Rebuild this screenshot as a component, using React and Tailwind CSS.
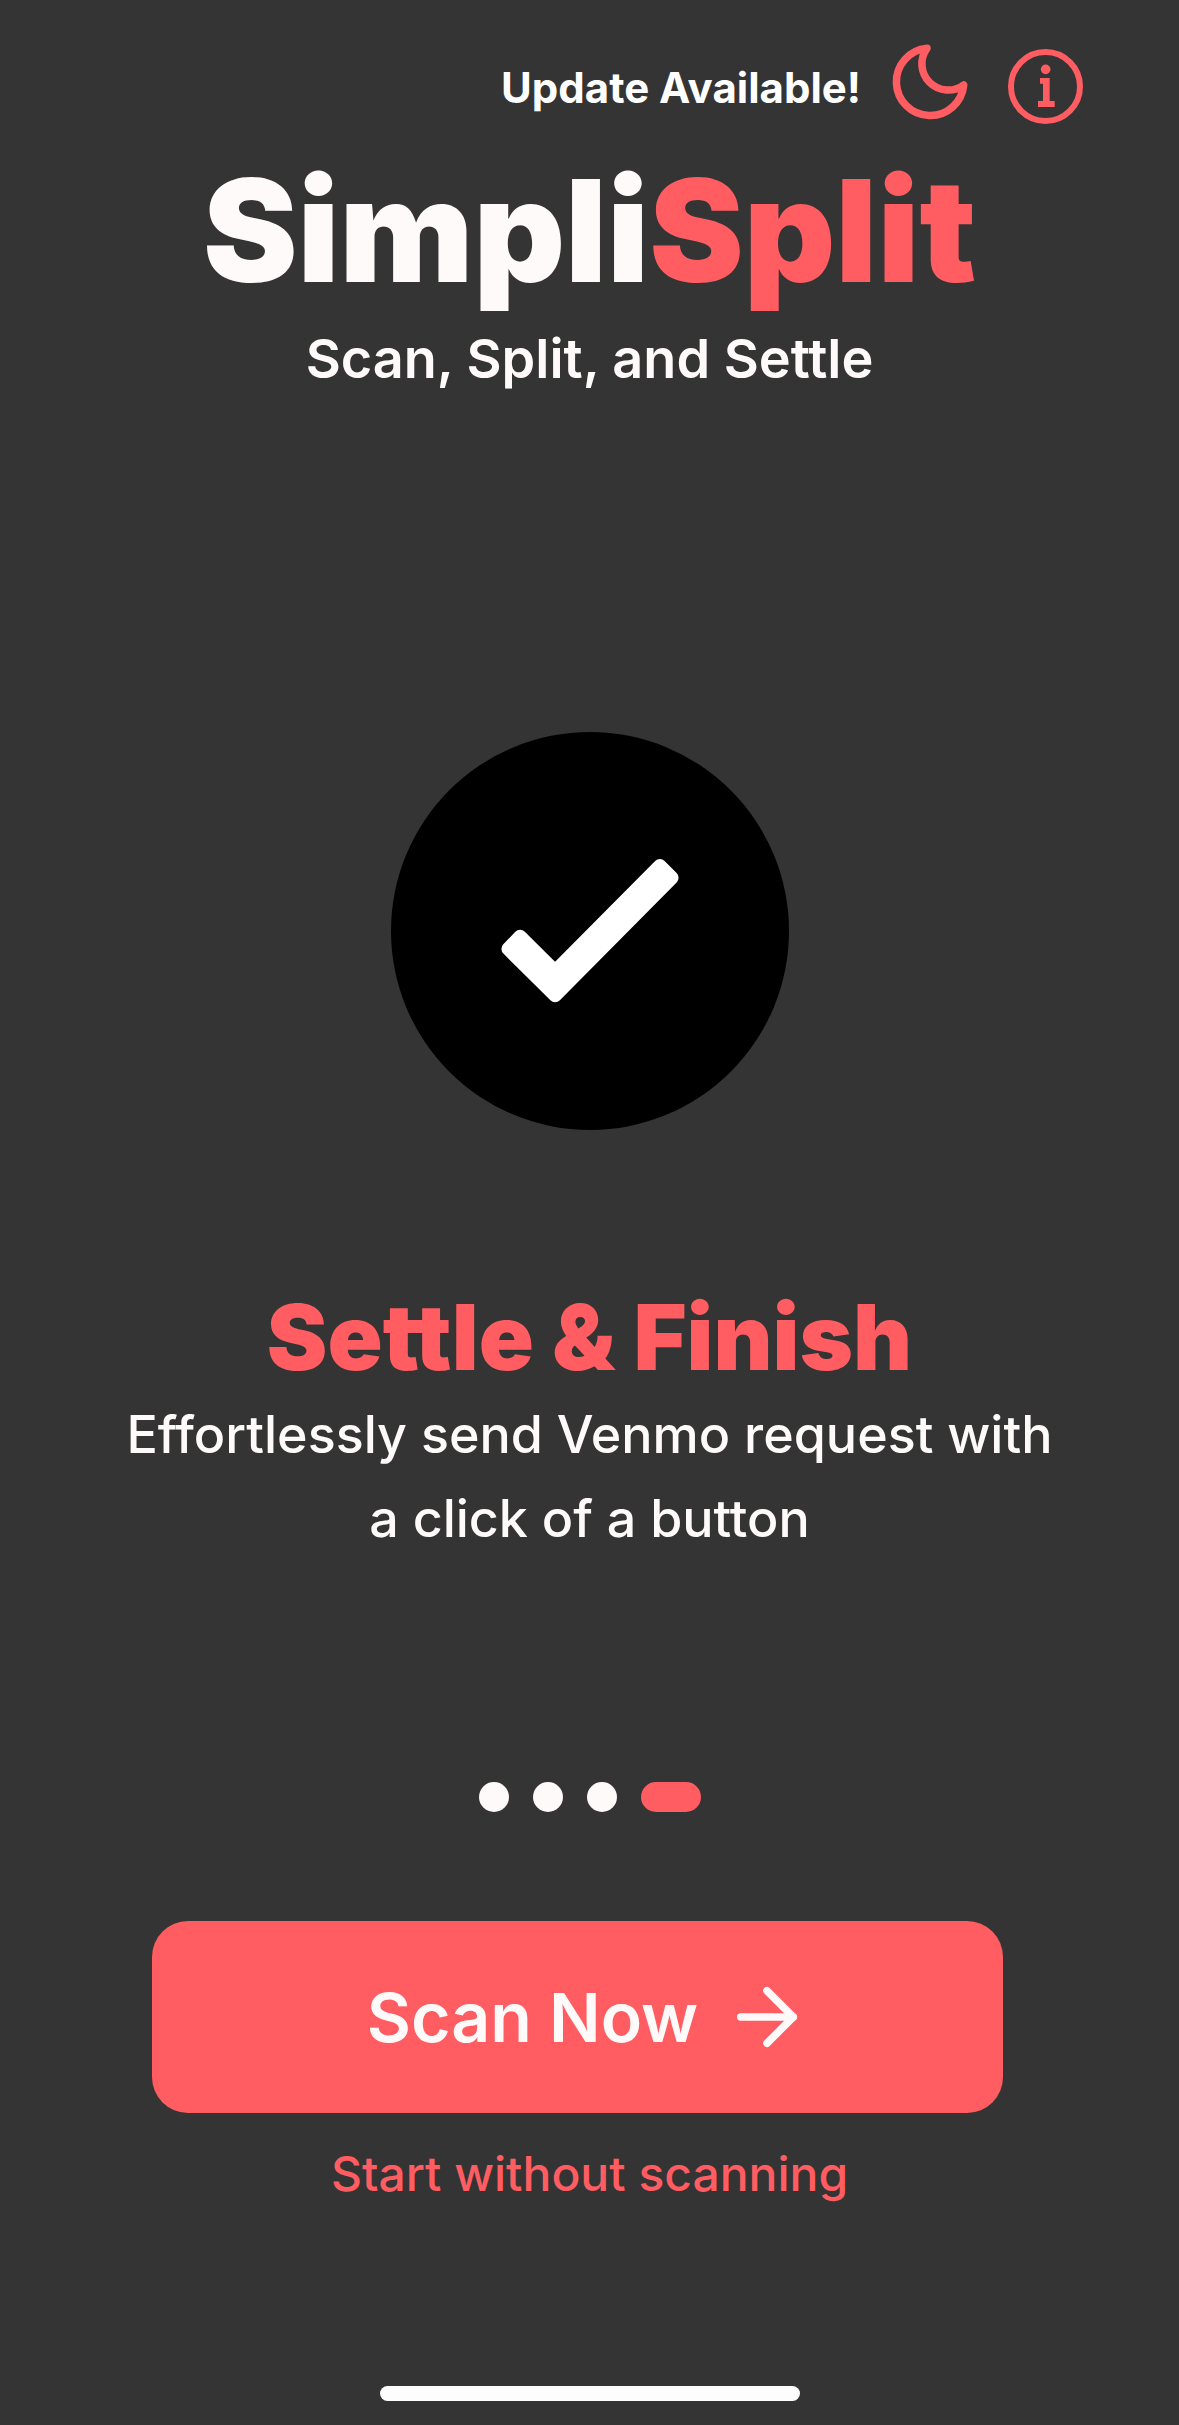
import { FiArrowRight, FiMoon } from "react-icons/fi";

function InfoIcon() {
  return (
    <svg viewBox="0 0 225 225" className="size-[75px]" aria-hidden="true">
      <circle cx="112.5" cy="112.5" r="103.5" fill="none" stroke="currentColor" strokeWidth="18" />
      <circle cx="113" cy="61" r="14.5" fill="currentColor" />
      <path d="M96 87h29v69h15v18H90v-18h15v-52h-9z" fill="currentColor" />
    </svg>
  );
}

function CheckBadge() {
  return (
    <svg viewBox="0 0 1193 1193" className="size-[398px]" role="img" aria-label="Done">
      <circle cx="596.5" cy="596.5" r="596.5" fill="#000" />
      <path
        d="M387 613L492 717L806 401L842 437L492 790L351 650Z"
        fill="#fff"
        stroke="#fff"
        strokeWidth="40"
        strokeLinejoin="round"
      />
    </svg>
  );
}

function Pager({ count, active }) {
  return (
    <div className="flex justify-center gap-6">
      {Array.from({ length: count }, (_, i) => (
        <button
          key={i}
          type="button"
          aria-label={`Slide ${i + 1}`}
          className={
            i === active
              ? "h-[30px] w-[60px] rounded-full bg-[#ff5d62]"
              : "size-[30px] rounded-full bg-[#fffafa]"
          }
        />
      ))}
    </div>
  );
}

export default function App() {
  return (
    <div className="flex min-h-screen flex-col bg-[#343434] font-['Inter',sans-serif] text-[#fffafa]">
      <header className="flex items-center justify-end pt-[37px] pr-24">
        <p className="mt-3 mr-6 text-[42px] leading-[48px] font-bold text-white">Update Available!</p>
        <button type="button" aria-label="Dark mode" className="mr-[33px] text-[#ff5d62]">
          <FiMoon className="size-[90px]" />
        </button>
        <button type="button" aria-label="About" className="mt-2 text-[#ff5d62]">
          <InfoIcon />
        </button>
      </header>

      <h1 className="mt-[23px] text-center text-[142px] leading-[160px] font-black">
        Simpli<span className="text-[#ff5d62]">Split</span>
      </h1>
      <p className="mt-[17px] text-center text-[54px] leading-[64px] font-semibold">Scan, Split, and Settle</p>

      <main className="mt-[341px] flex flex-col items-center px-[120px] text-center">
        <CheckBadge />
        <h2 className="mt-[155px] text-[91px] leading-[104px] font-black text-[#ff5d62]">
          Settle &amp; Finish
        </h2>
        <p className="mt-1 text-[52px] leading-[84px] font-medium">
          Effortlessly send Venmo request with a click of a button
        </p>
      </main>

      <div className="mt-[221px]">
        <Pager count={4} active={3} />
      </div>

      <button
        type="button"
        className="mt-[109px] mr-44 ml-[152px] flex h-48 items-center justify-center gap-6 rounded-[36px] bg-[#ff5d62] pl-6 text-[68px] leading-[88px] font-semibold"
      >
        Scan Now
        <FiArrowRight className="size-[90px]" />
      </button>
      <a href="#start" className="mt-[31px] self-center text-[48px] leading-[60px] font-medium text-[#ff5d62]">
        Start without scanning
      </a>

      <div className="mt-auto mb-6 h-[15px] w-[420px] self-center rounded-full bg-[#fdfdfd]" />
    </div>
  );
}
